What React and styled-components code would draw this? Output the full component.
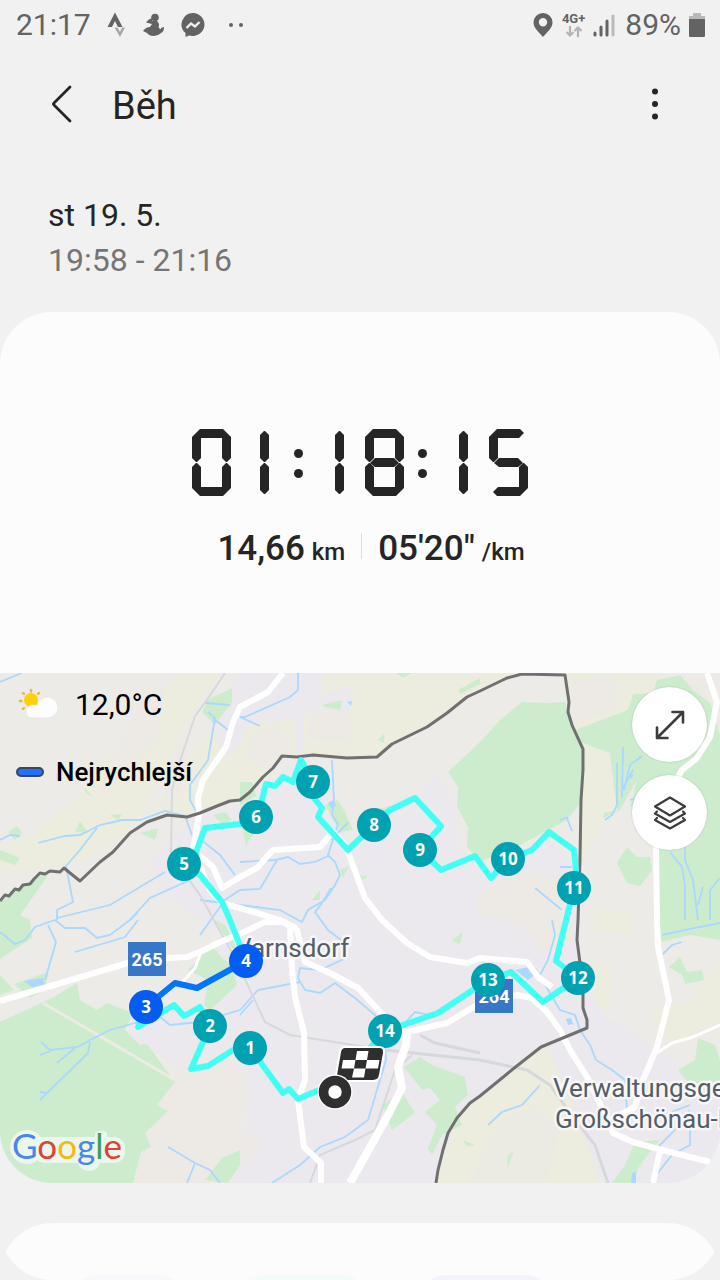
import styled, { createGlobalStyle } from "styled-components";

const GlobalStyle = createGlobalStyle`
  * {
    box-sizing: border-box;
  }
  body {
    margin: 0;
    background: #f1f1f1;
    color: #252525;
    font-family: Roboto, "Liberation Sans", sans-serif;
  }
  h1,
  p {
    margin: 0;
    font-weight: 400;
  }
  button {
    padding: 0;
    border: 0;
    background: none;
    font: inherit;
    color: inherit;
  }
  svg {
    display: block;
    flex: none;
  }
`;

const Page = styled.div`
  min-height: 100vh;
  display: flex;
  flex-direction: column;
  overflow-x: hidden;
`;

const StatusBar = styled.div`
  height: 50px;
  padding: 0 15px 0 16px;
  display: flex;
  align-items: center;
  justify-content: space-between;
  font-size: 30px;
  line-height: 50px;
  color: #636363;
`;

const StatusGroup = styled.div`
  display: flex;
  align-items: center;
  gap: ${(props) => props.$gap}px;
`;

const Network = styled.span`
  display: flex;
  flex-direction: column;
  align-items: center;
  font-size: 13px;
  font-weight: 700;
  line-height: 14px;
`;

const Header = styled.header`
  height: 108px;
  padding: 0 47px 0 44px;
  display: flex;
  align-items: center;
  h1 {
    flex: 1;
    padding: 4px 0 0 32px;
    font-size: 38px;
    line-height: 48px;
  }
`;

const IconButton = styled.button`
  width: 36px;
  height: 48px;
  display: flex;
  align-items: center;
  justify-content: center;
`;

const Dates = styled.div`
  padding: 35px 48px 29px;
  font-size: 32px;
  line-height: 45px;
`;

const TimeRange = styled.p`
  color: #757575;
`;

const Card = styled.section`
  border-radius: 52px;
  overflow: hidden;
  background: #fcfcfc;
`;

const Summary = styled.div`
  padding: 117px 16px 100px;
  display: flex;
  flex-direction: column;
  align-items: center;
  gap: 29px;
`;

const Hidden = styled.span`
  position: absolute;
  width: 1px;
  height: 1px;
  overflow: hidden;
  clip-path: inset(50%);
  white-space: nowrap;
`;

const Clock = styled.div`
  display: flex;
  align-items: center;
`;

const Digit = styled.span`
  width: ${(props) => (props.$one ? 33 : 39)}px;
  height: 67px;
  margin: ${(props) => (props.$one ? "0 16px 0 0" : "0 5px")};
  display: grid;
`;

const Segment = styled.span`
  grid-area: 1 / 1;
  background: #252525;
`;

const Bar = styled(Segment)`
  width: 31px;
  height: 9px;
  place-self: ${(props) => props.$at} center;
  clip-path: polygon(0 4px, 4px 0, 27px 0, 31px 4px, 26px 9px, 5px 9px);
  ${(props) => props.$at === "end" && "transform: scaleY(-1);"}
  ${(props) =>
    props.$at === "center" &&
    "clip-path: polygon(1px 5px, 6px 0, 25px 0, 30px 5px, 25px 9px, 6px 9px);"}
`;

const Post = styled(Segment)`
  width: 9px;
  height: ${(props) => (props.$long ? 31 : 29)}px;
  margin: ${(props) => (props.$long ? 2 : 4)}px 0;
  place-self: ${(props) => props.$at};
  clip-path: polygon(
    0 4px,
    4px 0,
    5px 0,
    9px 4px,
    9px calc(100% - 4px),
    5px 100%,
    4px 100%,
    0 calc(100% - 4px)
  );
`;

const Colon = styled.span`
  width: 26px;
  padding-top: 1px;
  display: flex;
  flex-direction: column;
  align-items: center;
  gap: 11px;
  &::before,
  &::after {
    content: "";
    width: 9px;
    height: 9px;
    border-radius: 50%;
    background: #252525;
  }
`;

const Stats = styled.div`
  padding-left: 22px;
  display: flex;
  align-items: center;
  gap: 16px;
`;

const Stat = styled.p`
  font-size: 35px;
  font-weight: 500;
  line-height: 48px;
  small {
    margin-left: 7px;
    font-size: 24px;
    line-height: 24px;
  }
`;

const Divider = styled.span`
  width: 1px;
  height: 26px;
  margin-bottom: 6px;
  background: #dcdcdc;
`;

const MapBox = styled.div`
  position: relative;
  background: #edebe7;
  > svg {
    width: 100%;
    height: auto;
  }
`;

const MapInfo = styled.div`
  position: absolute;
  top: 11px;
  left: 16px;
  color: #000;
`;

const InfoRow = styled.div`
  height: 40px;
  margin-bottom: 28px;
  display: flex;
  align-items: center;
  gap: ${(props) => props.$gap}px;
  font-size: ${(props) => props.$size}px;
  font-weight: ${(props) => props.$weight};
`;

const Swatch = styled.span`
  width: 28px;
  height: 10px;
  border: 2px solid #3a4560;
  border-radius: 5px;
  background: #2370fa;
`;

const MapButtons = styled.div`
  position: absolute;
  top: 14px;
  right: 13px;
  display: flex;
  flex-direction: column;
  gap: 13px;
`;

const RoundButton = styled.button`
  width: 75px;
  height: 75px;
  border-radius: 50%;
  background: #fff;
  box-shadow: 0 0 2px rgba(0, 0, 0, 0.2);
  display: flex;
  align-items: center;
  justify-content: center;
`;

const NextCard = styled.section`
  margin-top: 40px;
  border-radius: 52px 52px 0 0;
  overflow: hidden;
`;

const NextInner = styled.div`
  height: 57px;
  padding: 52px 70px 0;
  border-radius: 0 0 52px 52px;
  overflow: hidden;
  background: #fcfcfc;
  display: flex;
  gap: 48px;
`;

const Chip = styled.span`
  width: ${(props) => props.$width}px;
  height: 57px;
  flex: none;
  border-radius: 28px;
  background: ${(props) => props.$color};
`;

const SEGMENTS = {
  0: "abcdef",
  1: "bc",
  5: "acdfg",
  8: "abcdefg",
};

const ClockDigit = ({ value }) => {
  const on = SEGMENTS[value];
  const one = value === "1";
  return (
    <Digit $one={one}>
      {on.includes("a") && <Bar $at="start" />}
      {on.includes("g") && <Bar $at="center" />}
      {on.includes("d") && <Bar $at="end" />}
      {on.includes("f") && <Post $at="start start" />}
      {on.includes("e") && <Post $at="end start" />}
      {on.includes("b") && <Post $at="start end" $long={one} />}
      {on.includes("c") && <Post $at="end end" $long={one} />}
    </Digit>
  );
};

const ClockFace = ({ time }) => (
  <div role="timer">
    <Hidden>{time}</Hidden>
    <Clock aria-hidden="true">
      {time
        .split("")
        .map((ch, i) => (ch === ":" ? <Colon key={i} /> : <ClockDigit key={i} value={ch} />))}
    </Clock>
  </div>
);

const markers = [
  { n: 14, x: 385, y: 1031 },
  { n: 13, x: 488, y: 980 },
  { n: 12, x: 578, y: 978 },
  { n: 11, x: 574, y: 888 },
  { n: 10, x: 508, y: 859 },
  { n: 9, x: 420, y: 850 },
  { n: 8, x: 374, y: 825 },
  { n: 7, x: 313, y: 782 },
  { n: 6, x: 256, y: 817 },
  { n: 5, x: 184, y: 864 },
  { n: 4, x: 246, y: 961, fast: true },
  { n: 3, x: 146, y: 1007, fast: true },
  { n: 2, x: 210, y: 1026 },
  { n: 1, x: 250, y: 1048 },
];

const PlaceLabel = styled.text`
  font-size: 26px;
  fill: #555d66;
  stroke: #f7f6f8;
  stroke-width: 5px;
  stroke-linejoin: round;
  paint-order: stroke;
`;

const ShieldLabel = styled.text`
  font-size: 18px;
  font-weight: 700;
  text-anchor: middle;
  fill: #fff;
`;

const MarkerLabel = styled.text`
  font-family: "Noto Sans", sans-serif;
  font-size: 17px;
  font-weight: 700;
  text-anchor: middle;
  fill: #fff;
`;

const LogoText = styled.text`
  font-family: Lato, sans-serif;
  font-size: 35px;
`;

const Fields = () => (
  <>
    <g fill="#ebeadf">
      <path fill="#ecedde" d="M300 673H565L522 674L480 691L447 713L392 744L377 757L313 755L282 756L262 778L240 800L200 813L167 816L150 815L185 760L205 735L225 730L250 722L300 715L325 690Z" />
      <path fill="#ecedde" d="M178 673L222 673L200 700L180 735L165 770L130 830L80 862L0 873V850L40 830L84 790L105 758L135 740Z" />
      <path fill="#ecedde" d="M547 1045L513 1069L480 1096L457 1118L443 1150L436 1183H608L596 1150L583 1125L568 1085Z" />
      <path fill="#ecedde" d="M565 673H657L655 693L628 710L620 712L575 728L569 702Z" />
      <path fill="#ecedde" d="M583 742L610 753L617 810L604 820L590 845L582 850Z" />
      <path fill="#ecedde" d="M593 965L612 970L606 1027L592 1010ZM650 1012L690 1000L720 960V1020L670 1045ZM595 908L633 915L628 935L592 930Z" />
    </g>
    <g fill="#edeae6">
      <path d="M250 735L275 722L293 742L280 755L262 770L247 755ZM310 710L352 715L350 742L306 740Z" />
      <path d="M572 680L615 676L620 708L572 723ZM680 676H705L712 710L695 700Z" />
      <path d="M140 700L165 685L158 740L125 770L95 800ZM178 745L195 720L180 790L160 815Z" />
      <path d="M470 1183L500 1120L535 1105L560 1130L545 1183Z" opacity="0.7" />
    </g>
    <path
      fill="#ebe9ed"
      d="M197 815L240 805L266 784L301 758L330 775L348 845L415 797L433 775L455 800L458 845L480 868L520 868L545 835L580 870L578 955L587 990L610 1020L645 1040L690 1075L720 1090V1183H600L575 1110L547 1045L541 1047L480 1096L457 1118L436 1183H235L228 1150L248 1120L244 1070L190 1075L128 1035L135 1015L205 1010L200 960L222 935L165 895L150 860Z"
    />
    <path fill="#edeae6" d="M475 895L520 870L555 878L575 905L572 940L540 950L520 925L480 915Z" />
    <path fill="#edeae6" d="M175 1070L232 1055L250 1090L240 1130L262 1145L225 1183H133L145 1133L168 1111L157 1105L175 1082Z" />
    <path fill="#ebe9ed" d="M240 673H323L320 695L352 685L350 712L305 710L302 755H295V720L250 722L240 745L225 760L215 730L205 720Z" />
    <g fill="#cdeccd">
      <path d="M0 1022L52 998L77 983L80 1000L97 1010L107 1003L133 1013L125 1030L140 1045L147 1044L175 1082L157 1105L168 1111L145 1133L151 1147L141 1152L133 1183H0Z" />
      <path d="M480 742L448 772L458 787L457 807L468 827L467 847L480 862L505 850L520 845L567 820L581 802L583 750L570 725L565 702L547 703L522 702L500 720Z" />
      <path d="M575 730L628 710L633 694L653 693L657 680L680 675L693 690L710 703L720 735V930L690 928L660 936L657 847L640 833L643 805L630 807L637 780L620 810L603 818L604 813L617 810L610 753L580 742Z" />
      <path d="M627 847L617 863L627 883L640 886L652 870L650 857L637 857Z" />
      <path d="M0 920V959L32 938L30 920L20 915L45 880L50 870L25 885L0 902ZM0 975L14 990L0 995ZM14 984L45 973L48 975L45 990L30 998Z" />
      <path d="M0 850L20 858L15 865L0 860ZM8 832L17 826L22 833L15 840ZM75 832L80 821L88 833ZM110 815L122 814L118 820ZM140 833L158 828L155 840ZM84 787L93 797L86 793ZM208 700L232 688V702L215 725L202 712ZM173 850L180 845L190 860L182 866ZM213 815L225 812L232 820L222 825Z" />
      <path d="M240 782L252 782L256 796L240 805ZM242 828L255 832L246 845ZM322 705L342 700L340 710L325 707ZM377 740L384 734L384 743ZM325 805L338 800L345 812L353 830L340 832ZM340 870L349 866L343 878ZM358 875L368 876L363 880ZM312 900L320 890L320 900ZM380 808L392 806L388 815ZM396 673H412L403 678ZM458 690L480 678V684L460 694Z" />
      <path d="M188 970L212 945L222 958L232 965L237 985L210 1010L204 1005L208 980ZM215 920L225 925L238 948L232 948Z" />
      <path d="M382 1105L402 1092L415 1113L392 1130ZM404 1067L420 1057L432 1065L465 1077L468 1095L455 1107L462 1125L442 1135L432 1155L428 1148L437 1125L425 1112L440 1100L430 1088L422 1090ZM463 1140L475 1145L466 1146ZM452 940L463 932L460 944ZM205 1180L222 1158L240 1150V1165L228 1183Z" />
      <path d="M660 936L720 925V940L690 935L662 942ZM669 967L680 957L687 972L702 970L704 980L685 984L682 975ZM678 1070L695 1060L698 1038L715 1045L720 1060V1090L690 1085ZM635 1142L660 1140L640 1165L632 1183H612L625 1165ZM507 1157L514 1150L508 1168Z" />
    </g>
    <path stroke="#edebe2" strokeWidth="3" fill="none" d="M43 1003L175 1080" />
  </>
);

const Water = () => (
  <g fill="none" stroke="#abd8fc" strokeWidth="1.800">
    <path d="M0 682L22 673M38 843L65 836L80 835L100 825L122 820L140 820L165 811L185 816L192 835L205 843L220 855L235 875M97 828L80 850L66 866L73 902L57 910V920M57 918L110 905L165 872M0 840L10 835L20 836M130 920L150 898L190 880" />
    <path d="M0 932L15 944L25 940L35 927L55 920L65 928L85 928L97 938L110 935L130 920L138 912M75 952L125 937L138 920M48 925L56 942L45 980M41 1042L50 1050L78 1047L90 1040L110 1030L135 1023L160 1017L170 1025L200 1022L240 1010L258 990L300 982M40 1055L53 1050M57 1063L75 1048M90 1042L88 1053L40 1100M40 1092L48 1093" />
    <path d="M298 673L298 690L290 697L245 717L240 717L260 726M205 703L230 705M208 712L215 718L208 760L190 785L190 800L197 813M213 718L228 730M332 760L334 800L332 815L338 824L328 855L335 862L340 875L335 885L325 900L308 910L302 922L280 910L200 900M240 862L275 860L288 857L300 864L315 862L328 856M277 860L260 889L240 890L225 900L200 935M348 823L330 840M331 888L322 903L315 912L328 930L345 943L346 958L320 970L300 968L298 978L305 990L320 993L335 983L355 998L375 1015L384 1030L386 1060L368 1120L345 1137L320 1147L300 1165L272 1183" />
    <path d="M403 1025L415 1012L430 1015L450 1008M253 1000L240 1015M535 968L560 1010L575 1015L580 1030L590 1045L596 1060L612 1070L625 1080L627 1110L650 1120L690 1105M488 1125L502 1112L522 1105L540 1085M552 920L555 935L548 960L540 975M535 888L562 910M560 820L568 817M567 818L572 831M560 867H572" />
    <path d="M623 747L622 797M617 763V805L612 815L605 820M642 756L630 765L624 790M633 770L622 790M630 778L633 775M630 800L636 798M670 852L682 867L685 885V920M685 847V860L693 880L698 920M703 887L698 905M720 878L710 890V920M662 935L690 929L720 923M662 955L672 945L682 942M690 1110L675 1130L655 1150M690 1115V1145L672 1155L650 1183M168 1147L195 1163L210 1170L220 1183M195 1163L187 1183" />
    <path fill="#abd8fc" stroke="none" d="M24 981L43 978L45 985L32 987ZM328 803L333 800L336 805L332 809ZM515 970L528 967L535 975L528 980ZM566 1019L571 1018L573 1024L568 1025ZM347 702L352 701L351 706ZM632 1173L636 1172V1183H631Z" />
  </g>
);

const Roads = () => (
  <>
    <g fill="none" stroke="#d6d9dc" strokeWidth="2">
      <path d="M225 673L207 700L195 716L182 755L172 790L171 855L200 895L236 960L265 1022L290 1035L385 1050" />
      <path strokeWidth="3" d="M385 1050L480 1060L527 1070L550 1085L575 1120L595 1145L608 1183M420 1035L435 1043L480 1053" />
      <path d="M412 1055L395 1070L375 1130L355 1140L320 1155L310 1183" />
    </g>
    <g fill="none" stroke="#fff" strokeWidth="6" strokeLinejoin="round">
      <path d="M0 1001L128 963L167 958L187 957L200 952L220 942L240 934L265 922L283 922L297 930L305 962L330 973L358 988L385 1017L407 1032L447 1023L480 1003L517 995L532 998L547 1012L560 1030L570 1050L587 1077L603 1110L613 1133L633 1142L662 1150L710 1162" />
      <path d="M283 673L268 692L240 707L233 722L226 747L203 780L198 797L199 815L193 850L213 867L222 888L240 877L257 868L273 850L320 847L333 832L345 845" />
      <path d="M193 850L210 890L222 903L240 908L280 920L296 928" />
      <path d="M348 852L365 898L382 920L407 943L430 957L467 963L480 958L527 962L538 977L552 987" />
      <path d="M290 925L292 970L295 997L304 1033L305 1080L298 1100L304 1147L321 1163V1183" />
      <path strokeWidth="8" d="M407 1032L406 1045L398 1067L402 1088L387 1117L350 1183" />
      <path d="M707 673L717 702L710 737L697 758L682 770L665 800L656 847L657 920L658 947L669 1000L657 1047L643 1080L635 1107L610 1120M660 1150L653 1183" />
      <path strokeWidth="3" d="M720 1025L693 1037L672 1043L657 1053M200 955L195 968L180 985" />
    </g>
    <path
      fill="none"
      stroke="#707070"
      strokeWidth="3"
      strokeLinejoin="round"
      d="M0 901L5 895L9 896L15 889L19 890L23 885L30 884L34 879L40 873L45 874L50 871L60 872L64 868L70 873L80 881L100 862L113 852L130 833L147 822L167 815L187 817L200 813L217 806L230 801L240 800L250 792L263 777L273 768L282 756L297 757L313 755L347 758L377 757L392 744L427 727L447 713L467 697L480 691L507 678L522 674L565 675L569 702L568 712L572 725L583 749V770L581 800L580 860L578 920L577 940L580 963L583 995V1008L587 1020V1028L570 1035L541 1047L513 1069L480 1096L470 1103L457 1118L448 1133L443 1150L438 1170L436 1183"
    />
  </>
);

const RouteMap = () => (
  <svg viewBox="0 673 720 510" role="img" aria-label="Trasa běhu">
    <Fields />
    <Water />
    <Roads />
    <PlaceLabel x="235" y="957">Varnsdorf</PlaceLabel>
    <PlaceLabel x="553" y="1097">Verwaltungsge</PlaceLabel>
    <PlaceLabel x="555" y="1128">Großschönau-H</PlaceLabel>
    <g fill="#3877c7">
      <rect x="128" y="942" width="38" height="34" />
      <rect x="475" y="979" width="38" height="34" />
    </g>
    <ShieldLabel x="147" y="966">265</ShieldLabel>
    <ShieldLabel x="494" y="1003">264</ShieldLabel>
    <g fill="none" strokeWidth="6" strokeLinejoin="round" strokeLinecap="round">
      <path
        stroke="#41fff3"
        d="M335 1088L317 1091L298 1099L289 1089L283 1093L250 1048L233 1050L208 1066L191 1069L210 1026L200 1007L184 1016L174 1005L138 1027L146 1007"
      />
      <path
        stroke="#41fff3"
        d="M246 961L230 920L222 902L200 875L184 864L195 855L205 828L240 824L256 817L262 800L266 784L275 786L283 777L293 782L301 760L313 782L314 798L322 808L318 817L348 850L374 825L390 810L415 798L441 826L420 850L441 870L475 856L491 878L508 859L532 850L549 832L574 850L576 870L574 888L556 961L578 978L543 1002L511 972L488 980L438 1013L403 1025L385 1031L371 1047"
      />
      <path stroke="#0074fb" d="M146 1007L158 997L175 983L197 988L246 961" />
    </g>
    {markers.map((m) => (
      <g key={m.n}>
        <circle cx={m.x} cy={m.y} r="17" fill={m.fast ? "#045cf0" : "#00a2b1"} />
        <MarkerLabel x={m.x} y={m.y + 6}>
          {m.n}
        </MarkerLabel>
      </g>
    ))}
    <path fill="#2f2f2f" stroke="#fff" strokeWidth="2" d="M345 1047H379Q385 1047 384 1053L380 1075Q379 1081 373 1081H341Q335 1081 336 1075L340 1052Q341 1047 345 1047Z" />
    <path fill="#fff" d="M357 1051H368.500L367 1060H355.500ZM343 1060H355.500L354 1068.500H341.500ZM367 1060H379.500L378 1068.500H365.500ZM354 1068.500H365.500L364 1077.500H352Z" />
    <circle cx="335" cy="1092" r="17.500" fill="#fff" />
    <circle cx="335" cy="1092" r="11.500" fill="#fff" stroke="#2f2f2f" strokeWidth="9.500" />
    <g fill="#fff" opacity="0.6">
      <circle cx="27" cy="1147" r="17" />
      <rect x="34" y="1137" width="91" height="26" rx="11" />
      <rect x="95" y="1131" width="12" height="28" rx="4" />
      <rect x="78" y="1146" width="22" height="25" rx="10" />
    </g>
    <LogoText x="12" y="1159">
      <tspan fill="#4885ed">G</tspan>
      <tspan fill="#db4437">o</tspan>
      <tspan fill="#f4b913">o</tspan>
      <tspan fill="#4885ed">g</tspan>
      <tspan fill="#3c9f56">l</tspan>
      <tspan fill="#db4437">e</tspan>
    </LogoText>
  </svg>
);

const StravaIcon = () => (
  <svg width="20" height="26" viewBox="0 0 20 26">
    <path fill="#636363" d="M0.500 15L8 0.500L15.500 15H11L8 9L5 15Z" />
    <path fill="#a8a8a8" d="M7.500 15.500H10.500L13 20L15 15.500H18L13 25Z" />
  </svg>
);

const RunnerIcon = () => (
  <svg width="22" height="26" viewBox="0 0 22 26">
    <circle cx="12" cy="5.500" r="3.800" fill="#636363" />
    <path fill="#636363" d="M9 9L14 9Q17 12 15.500 15Q18 19 18 16L21 15Q21 20 18 21Q15 24 11 24Q6 24 4 21L0 19Q3 15 7 15L9 12L3 10.500Q5 7 9 6Z" />
  </svg>
);

const MessengerIcon = () => (
  <svg width="24" height="26" viewBox="0 0 24 26">
    <path fill="#636363" d="M12 1A12 11.500 0 1 1 8 23.500L4.500 25V21A12 11.500 0 0 1 12 1Z" />
    <path fill="none" stroke="#f1f1f1" strokeWidth="2.400" d="M5.500 16L10 11.500L14 14.500L18.500 10" />
  </svg>
);

const App = () => {
  return (
    <>
      <GlobalStyle />
      <Page>
        <StatusBar>
          <StatusGroup $gap={16}>
            <span>21:17</span>
            <StravaIcon />
            <RunnerIcon />
            <MessengerIcon />
            <svg width="24" height="6" viewBox="0 0 24 6" fill="#636363">
              <circle cx="10" cy="3" r="2" />
              <circle cx="20" cy="3" r="2" />
            </svg>
          </StatusGroup>
          <StatusGroup $gap={8}>
            <svg width="22" height="26" viewBox="0 0 22 26">
              <path fill="#636363" fillRule="evenodd" d="M11 1a9.500 9.500 0 0 1 9.500 9.500C20.500 16 15 20 11 25C7 20 1.500 16 1.500 10.500A9.500 9.500 0 0 1 11 1ZM11 6a4.200 4.200 0 1 0 0 8.400A4.200 4.200 0 0 0 11 6Z" />
            </svg>
            <Network>
              4G+
              <svg width="18" height="12" viewBox="0 0 18 12" fill="none" stroke="#b4b4b4" strokeWidth="2.200">
                <path d="M5 0V9M1.500 6L5 9.500L8.500 6M13 11V2M9.500 5L13 1.500L16.500 5" />
              </svg>
            </Network>
            <svg width="24" height="24" viewBox="0 0 24 24" fill="none" stroke="#636363" strokeWidth="3" strokeLinecap="round">
              <path d="M2 20V22M8 14V22M14 8V22" />
              <path stroke="#bababa" d="M20 3V22" />
            </svg>
            <span>89%</span>
            <svg width="16" height="24" viewBox="0 0 16 24">
              <path fill="#b9b9b9" d="M4 0H12V3H16V7H0V3H4Z" />
              <path fill="#636363" d="M0 6H16V23Q16 24 15 24H1Q0 24 0 23Z" />
            </svg>
          </StatusGroup>
        </StatusBar>

        <Header>
          <IconButton aria-label="Zpět">
            <svg width="22" height="38" viewBox="0 0 22 38" fill="none" stroke="#252525" strokeWidth="2.800" strokeLinecap="round" strokeLinejoin="round">
              <path d="M19 2L3 18Q2 19 3 20L19 36" />
            </svg>
          </IconButton>
          <h1>Běh</h1>
          <IconButton aria-label="Další možnosti">
            <svg width="6" height="32" viewBox="0 0 6 32" fill="#252525">
              <circle cx="3" cy="3.500" r="3" />
              <circle cx="3" cy="16" r="3" />
              <circle cx="3" cy="28.500" r="3" />
            </svg>
          </IconButton>
        </Header>

        <Dates>
          <p>st 19. 5.</p>
          <TimeRange>19:58 - 21:16</TimeRange>
        </Dates>

        <Card>
          <Summary>
            <ClockFace time="01:18:15" />
            <Stats>
              <Stat>
                14,66<small>km</small>
              </Stat>
              <Divider />
              <Stat>
                05'20"<small>/km</small>
              </Stat>
            </Stats>
          </Summary>
          <MapBox>
            <RouteMap />
            <MapInfo>
              <InfoRow $gap={16} $size={30} $weight={400}>
                <svg width="43" height="32" viewBox="0 0 43 32">
                  <g stroke="#e7b93c" strokeWidth="2.400" strokeLinecap="round">
                    <path d="M15 2V3.500M7 5L8 6M23 5L22 6M4 13H5.500M7 21L8 20" />
                  </g>
                  <circle cx="15" cy="12" r="7" fill="#fbd20a" />
                  <path fill="#fdfdfd" stroke="#e4e2df" strokeWidth="0.600" d="M16 30A6.500 6.500 0 0 1 17 17Q19 17 21 18A10.500 10.500 0 1 1 31 30Z" />
                </svg>
                12,0°C
              </InfoRow>
              <InfoRow $gap={12} $size={26} $weight={500}>
                <Swatch />
                Nejrychlejší
              </InfoRow>
            </MapInfo>
            <MapButtons>
              <RoundButton aria-label="Zvětšit mapu">
                <svg width="32" height="32" viewBox="0 0 32 32" fill="none" stroke="#3c3c3c" strokeWidth="2.600" strokeLinecap="round" strokeLinejoin="round">
                  <path d="M3 29L29 3M18.500 3H29V13.500M3 18.500V29H13.500" />
                </svg>
              </RoundButton>
              <RoundButton aria-label="Vrstvy mapy">
                <svg width="34" height="34" viewBox="0 0 34 34" fill="none" stroke="#3c3c3c" strokeWidth="2.200" strokeLinejoin="round" strokeLinecap="round">
                  <path d="M17 1.500L32 10.500L17 19.500L2 10.500ZM4 15.500L2 17.500L17 26L32 17.500L30 15.500M4 22L2 24L17 32.500L32 24L30 22" />
                </svg>
              </RoundButton>
            </MapButtons>
          </MapBox>
        </Card>

        <NextCard>
          <NextInner>
            <Chip $width={116} $color="#f6f8fb" />
            <Chip $width={136} $color="#f2fdf8" />
            <Chip $width={136} $color="#f4f2fb" />
          </NextInner>
        </NextCard>
      </Page>
    </>
  );
};

export default App;
